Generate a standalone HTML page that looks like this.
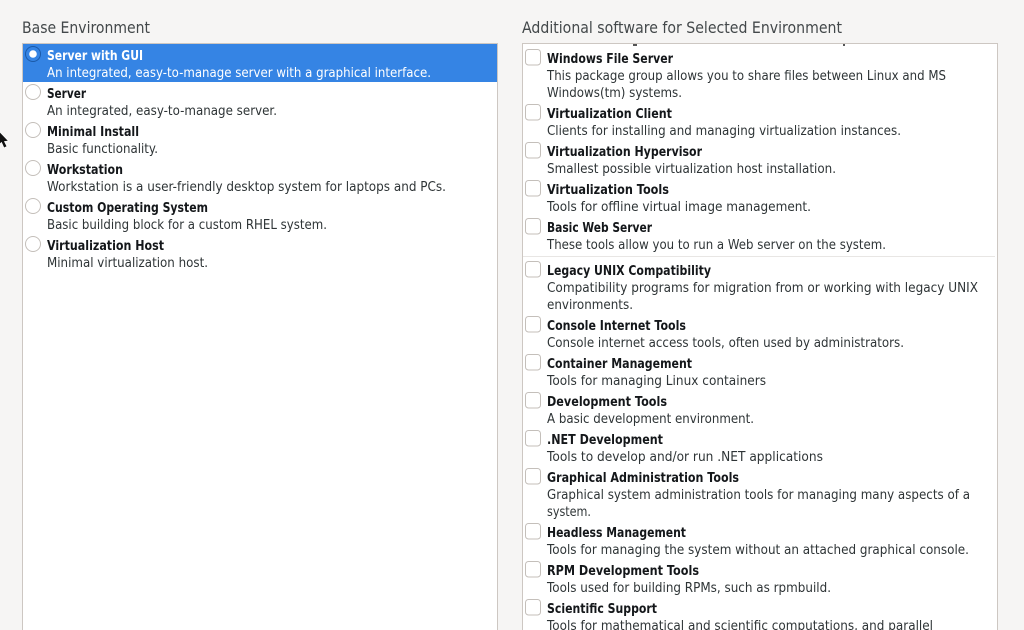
<!DOCTYPE html>
<html><head><meta charset="utf-8"><style>
html,body{margin:0;padding:0;width:1024px;height:630px;overflow:hidden;background:#f6f5f4}
svg{display:block}
text{font-family:"DejaVu Sans","Liberation Sans",sans-serif;font-size:13px;fill:#2e3436}
.b{font-weight:bold;font-size:13px;fill:#14171a}
.h{font-size:15.8px;fill:#43484a}
.w{fill:#fff}
.r{fill:#fff;stroke:#c4bfba;stroke-width:1}
.c{fill:#fff;stroke:#c4bfba;stroke-width:1}
</style></head><body>
<svg width="1024" height="630" viewBox="0 0 1024 630" xmlns="http://www.w3.org/2000/svg">
<rect width="1024" height="630" fill="#f6f5f4"/>
<rect x="22.5" y="43.5" width="475" height="600" fill="#fff" stroke="#cdc7c2"/>
<rect x="522.5" y="43.5" width="475" height="600" fill="#fff" stroke="#cdc7c2"/>
<rect x="23" y="44" width="474" height="38" fill="#3584e4"/>
<circle cx="33" cy="54" r="7.5" fill="#3584e4" stroke="#1b5aa8" stroke-width="1"/>
<circle cx="33" cy="54" r="3.8" fill="#fff"/>
<circle class="r" cx="33" cy="92" r="7.5"/>
<circle class="r" cx="33" cy="130" r="7.5"/>
<circle class="r" cx="33" cy="168" r="7.5"/>
<circle class="r" cx="33" cy="206" r="7.5"/>
<circle class="r" cx="33" cy="244" r="7.5"/>
<rect x="633" y="44" width="4" height="2" fill="#555"/>
<rect x="843" y="44" width="2" height="2" fill="#555"/>
<rect class="c" x="525.5" y="49.5" width="15" height="15.5" rx="3"/>
<rect class="c" x="525.5" y="104.5" width="15" height="15.5" rx="3"/>
<rect class="c" x="525.5" y="142.5" width="15" height="15.5" rx="3"/>
<rect class="c" x="525.5" y="180.5" width="15" height="15.5" rx="3"/>
<rect class="c" x="525.5" y="218.5" width="15" height="15.5" rx="3"/>
<rect x="523" y="256" width="472" height="1" fill="#e8e6e4"/>
<rect class="c" x="525.5" y="261.5" width="15" height="15.5" rx="3"/>
<rect class="c" x="525.5" y="316.5" width="15" height="15.5" rx="3"/>
<rect class="c" x="525.5" y="354.5" width="15" height="15.5" rx="3"/>
<rect class="c" x="525.5" y="392.5" width="15" height="15.5" rx="3"/>
<rect class="c" x="525.5" y="430.5" width="15" height="15.5" rx="3"/>
<rect class="c" x="525.5" y="468.5" width="15" height="15.5" rx="3"/>
<rect class="c" x="525.5" y="523.5" width="15" height="15.5" rx="3"/>
<rect class="c" x="525.5" y="561.5" width="15" height="15.5" rx="3"/>
<rect class="c" x="525.5" y="599.5" width="15" height="15.5" rx="3"/>
<text class="h" x="22" y="33" textLength="128" lengthAdjust="spacingAndGlyphs">Base Environment</text>
<text class="h" x="522" y="33" textLength="320" lengthAdjust="spacingAndGlyphs">Additional software for Selected Environment</text>
<text class="b w" x="47" y="60" textLength="96" lengthAdjust="spacingAndGlyphs">Server with GUI</text>
<text class="w" x="47" y="77" textLength="384" lengthAdjust="spacingAndGlyphs">An integrated, easy-to-manage server with a graphical interface.</text>
<text class="b" x="47" y="98" textLength="39" lengthAdjust="spacingAndGlyphs">Server</text>
<text x="47" y="115" textLength="230" lengthAdjust="spacingAndGlyphs">An integrated, easy-to-manage server.</text>
<text class="b" x="47" y="136" textLength="92" lengthAdjust="spacingAndGlyphs">Minimal Install</text>
<text x="47" y="153" textLength="111" lengthAdjust="spacingAndGlyphs">Basic functionality.</text>
<text class="b" x="47" y="174" textLength="76" lengthAdjust="spacingAndGlyphs">Workstation</text>
<text x="47" y="191" textLength="399" lengthAdjust="spacingAndGlyphs">Workstation is a user-friendly desktop system for laptops and PCs.</text>
<text class="b" x="47" y="212" textLength="161" lengthAdjust="spacingAndGlyphs">Custom Operating System</text>
<text x="47" y="229" textLength="280" lengthAdjust="spacingAndGlyphs">Basic building block for a custom RHEL system.</text>
<text class="b" x="47" y="250" textLength="117" lengthAdjust="spacingAndGlyphs">Virtualization Host</text>
<text x="47" y="267" textLength="161" lengthAdjust="spacingAndGlyphs">Minimal virtualization host.</text>
<text class="b" x="547" y="63" textLength="126" lengthAdjust="spacingAndGlyphs">Windows File Server</text>
<text x="547" y="80" textLength="399" lengthAdjust="spacingAndGlyphs">This package group allows you to share files between Linux and MS</text>
<text x="547" y="97" textLength="135" lengthAdjust="spacingAndGlyphs">Windows(tm) systems.</text>
<text class="b" x="547" y="118" textLength="125" lengthAdjust="spacingAndGlyphs">Virtualization Client</text>
<text x="547" y="135" textLength="354" lengthAdjust="spacingAndGlyphs">Clients for installing and managing virtualization instances.</text>
<text class="b" x="547" y="156" textLength="155" lengthAdjust="spacingAndGlyphs">Virtualization Hypervisor</text>
<text x="547" y="173" textLength="289" lengthAdjust="spacingAndGlyphs">Smallest possible virtualization host installation.</text>
<text class="b" x="547" y="194" textLength="122" lengthAdjust="spacingAndGlyphs">Virtualization Tools</text>
<text x="547" y="211" textLength="264" lengthAdjust="spacingAndGlyphs">Tools for offline virtual image management.</text>
<text class="b" x="547" y="232" textLength="105" lengthAdjust="spacingAndGlyphs">Basic Web Server</text>
<text x="547" y="249" textLength="339" lengthAdjust="spacingAndGlyphs">These tools allow you to run a Web server on the system.</text>
<text class="b" x="547" y="275" textLength="164" lengthAdjust="spacingAndGlyphs">Legacy UNIX Compatibility</text>
<text x="547" y="292" textLength="431" lengthAdjust="spacingAndGlyphs">Compatibility programs for migration from or working with legacy UNIX</text>
<text x="547" y="309" textLength="86" lengthAdjust="spacingAndGlyphs">environments.</text>
<text class="b" x="547" y="330" textLength="139" lengthAdjust="spacingAndGlyphs">Console Internet Tools</text>
<text x="547" y="347" textLength="357" lengthAdjust="spacingAndGlyphs">Console internet access tools, often used by administrators.</text>
<text class="b" x="547" y="368" textLength="145" lengthAdjust="spacingAndGlyphs">Container Management</text>
<text x="547" y="385" textLength="219" lengthAdjust="spacingAndGlyphs">Tools for managing Linux containers</text>
<text class="b" x="547" y="406" textLength="120" lengthAdjust="spacingAndGlyphs">Development Tools</text>
<text x="547" y="423" textLength="207" lengthAdjust="spacingAndGlyphs">A basic development environment.</text>
<text class="b" x="547" y="444" textLength="116" lengthAdjust="spacingAndGlyphs">.NET Development</text>
<text x="547" y="461" textLength="276" lengthAdjust="spacingAndGlyphs">Tools to develop and/or run .NET applications</text>
<text class="b" x="547" y="482" textLength="192" lengthAdjust="spacingAndGlyphs">Graphical Administration Tools</text>
<text x="547" y="499" textLength="423" lengthAdjust="spacingAndGlyphs">Graphical system administration tools for managing many aspects of a</text>
<text x="547" y="516" textLength="44" lengthAdjust="spacingAndGlyphs">system.</text>
<text class="b" x="547" y="537" textLength="139" lengthAdjust="spacingAndGlyphs">Headless Management</text>
<text x="547" y="554" textLength="422" lengthAdjust="spacingAndGlyphs">Tools for managing the system without an attached graphical console.</text>
<text class="b" x="547" y="575" textLength="152" lengthAdjust="spacingAndGlyphs">RPM Development Tools</text>
<text x="547" y="592" textLength="284" lengthAdjust="spacingAndGlyphs">Tools used for building RPMs, such as rpmbuild.</text>
<text class="b" x="547" y="613" textLength="110" lengthAdjust="spacingAndGlyphs">Scientific Support</text>
<text x="547" y="630" textLength="386" lengthAdjust="spacingAndGlyphs">Tools for mathematical and scientific computations, and parallel</text>
<path d="M-2 130 L8.5 141 L4.5 141.5 L7 146.5 L4 148 L1.5 142.5 L-2 145.5 Z" fill="#111" stroke="#fff" stroke-width="0.7"/>
</svg>
</body></html>
